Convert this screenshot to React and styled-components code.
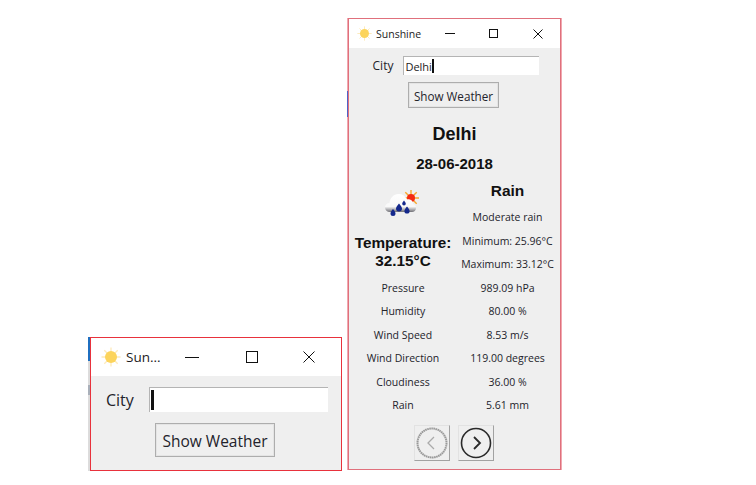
import React from "react";
import styled, { createGlobalStyle } from "styled-components";

const Global = createGlobalStyle`
  html, body {
    margin: 0;
    padding: 0;
    background: #fff;
  }
  body {
    width: 756px;
    height: 485px;
    overflow: hidden;
    position: relative;
    font-family: "Open Sans", "Liberation Sans", sans-serif;
  }
`;

// bits of the desktop that peek out behind the pasted windows
const EdgeStrip = styled.div`
  position: absolute;
  left: ${p => p.$x}px;
  top: ${p => p.$y}px;
  width: ${p => p.$w}px;
  height: ${p => p.$h}px;
  background: ${p => p.$color};
`;

const Window = styled.div`
  position: absolute;
  left: ${p => p.$x}px;
  top: ${p => p.$y}px;
  width: ${p => p.$w}px;
  height: ${p => p.$h}px;
  box-sizing: border-box;
  border: 1px solid ${p => p.$border};
  background: #efefef;
  display: flex;
  flex-direction: column;
`;

const TitleBar = styled.div`
  height: ${p => p.$h}px;
  flex: none;
  background: #fff;
  display: flex;
  align-items: center;
  color: #111;
  font-size: ${p => p.$font}px;
`;

const TitleIcon = styled.span`
  flex: none;
  display: flex;
  margin-left: ${p => p.$left}px;
  margin-right: ${p => p.$right}px;
`;

const TitleText = styled.span`
  flex: none;
  width: ${p => p.$w}px;
  white-space: nowrap;
  color: #1c1c1c;
`;

const WinButton = styled.span`
  flex: none;
  width: ${p => p.$w}px;
  display: flex;
  justify-content: center;
`;

const SmallBody = styled.div`
  flex: 1;
  display: flex;
  flex-direction: column;
  align-items: flex-start;
  padding: 11px 0 0 15px;
`;

const CityRow = styled.div`
  display: flex;
  align-items: center;
  gap: ${p => p.$gap}px;
  margin-left: ${p => p.$left || 0}px;
`;

const CityLabel = styled.span`
  font-size: ${p => p.$font}px;
  color: #23232b;
`;

const CityInput = styled.div`
  box-sizing: border-box;
  width: ${p => p.$w}px;
  height: ${p => p.$h}px;
  background: #fff;
  border-top: 1px solid #b4b4b4;
  border-left: 1px solid #b4b4b4;
  display: flex;
  align-items: center;
  padding-left: 1px;
  font-size: ${p => p.$font}px;
  color: #222;
`;

const Caret = styled.span`
  display: inline-block;
  width: ${p => p.$w}px;
  height: ${p => p.$h}px;
  background: #111;
`;

const PushButton = styled.div`
  box-sizing: border-box;
  width: ${p => p.$w}px;
  height: ${p => p.$h}px;
  margin: ${p => p.$margin};
  padding-top: 1px;
  border: 1px solid #adadad;
  box-shadow: inset 0 0 0 1px #e4e4e4;
  background: #efefef;
  display: flex;
  align-items: center;
  justify-content: center;
  font-size: ${p => p.$font}px;
  color: #23232b;
  white-space: nowrap;
`;

const BigBody = styled.div`
  flex: 1;
  display: flex;
  flex-direction: column;
  align-items: center;
  padding-top: 8px;
`;

const BoldLine = styled.div`
  font-family: "Liberation Sans", Arial, sans-serif;
  font-weight: bold;
  font-size: ${p => p.$font}px;
  line-height: ${p => p.$line}px;
  margin-top: ${p => p.$top || 0}px;
  color: #111;
  text-align: center;
`;

const Columns = styled.div`
  width: 100%;
  margin-top: 5px;
  display: grid;
  grid-template-columns: 108px 101px;
`;

const Cell = styled.div`
  height: ${p => p.$h || 23.5}px;
  display: flex;
  align-items: center;
  justify-content: center;
  font-size: 10.5px;
  color: #23232b;
  white-space: nowrap;
`;

const IconCell = styled.div`
  grid-row: span 2;
  display: flex;
  align-items: flex-start;
  justify-content: center;
  padding: 11px 0 0 0;
`;

const TempCell = styled.div`
  grid-row: span 2;
  display: flex;
  flex-direction: column;
  align-items: center;
  justify-content: center;
  padding-bottom: 2px;
  white-space: nowrap;
`;

const NavRow = styled.div`
  display: flex;
  gap: 8px;
  margin-top: 8px;
  margin-right: 1px;
`;

const NavButton = styled.div`
  box-sizing: border-box;
  width: 36px;
  height: 36px;
  background: #efefef;
  border-top: 1px solid #e2e2e2;
  border-left: 1px solid #e2e2e2;
  border-right: 1px solid #a2a2a2;
  border-bottom: 1px solid #a2a2a2;
  display: flex;
  align-items: center;
  justify-content: center;
`;

const Sun = ({ size }) => (
  <svg width={size} height={size} viewBox="0 0 20 20">
    <g stroke="#fdeabb" strokeWidth="1.3">
      <path d="M10 .5v19M.5 10h19M3.3 3.3l13.400 13.400M16.700 3.300L3.300 16.700" />
    </g>
    <circle cx="10" cy="10" r="6" fill="#fcd45c" />
  </svg>
);

const Minimize = ({ w }) => (
  <svg width={w} height="3" viewBox={`0 0 ${w} 3`}>
    <path d={`M0 1.5H${w}`} stroke="#111" strokeWidth="1" />
  </svg>
);

const Maximize = ({ s }) => (
  <svg width={s} height={s} viewBox={`0 0 ${s} ${s}`}>
    <rect x=".5" y=".5" width={s - 1} height={s - 1} fill="none" stroke="#111" />
  </svg>
);

const Close = ({ s }) => (
  <svg width={s} height={s} viewBox={`0 0 ${s} ${s}`}>
    <path d={`M.5 .5L${s - 0.5} ${s - 0.5}M${s - 0.5} .5L.5 ${s - 0.5}`} stroke="#111" strokeWidth="1" fill="none" />
  </svg>
);

const WeatherIcon = () => (
  <svg width="36" height="30" viewBox="0 0 36 30">
    <defs>
      <linearGradient id="cloud" x1="0" y1="0" x2="0" y2="1">
        <stop offset="0" stopColor="#ffffff" />
        <stop offset="0.7" stopColor="#f8f8f8" />
        <stop offset="1" stopColor="#6f6f75" />
      </linearGradient>
    </defs>
    <g stroke="#f7a72c" strokeWidth="1.4">
      <path d="M26 1v16M18 9h16M20.300 3.300l11.400 11.400M31.700 3.300L20.300 14.700" />
    </g>
    <circle cx="26" cy="9" r="4" fill="#f42a10" />
    <path
      d="M5 23c-3 0-5-2-5-4.500 0-2.500 2-4.500 4.500-4.500.5-5 4-9 9-9 4 0 7 2 8.500 5.500 1-.5 3-.5 4 .5 1.500 1 2 2.500 2 4 2 .5 3 2 3 4 0 2.500-2 4-4 4z"
      fill="url(#cloud)"
    />
    <g fill="#14288c">
      <path d="M8 20c1.500 2 2.500 3 2.500 4.500a2.500 2.500 0 0 1-5 0c0-1.500 1-2.500 2.500-4.500z" />
      <path d="M14 14.500c1.700 2.300 3 3.500 3 5a3 3 0 0 1-6 0c0-1.500 1.300-2.700 3-5z" />
      <path d="M19 11.500c1 1.400 1.800 2.200 1.800 3.200a1.800 1.800 0 0 1-3.600 0c0-1 .8-1.800 1.800-3.200z" />
      <path d="M22 17.500c1.500 2 2.600 3 2.600 4.500a2.600 2.600 0 0 1-5.200 0c0-1.500 1.100-2.500 2.600-4.500z" />
    </g>
  </svg>
);

const NavCircle = ({ direction, disabled }) => {
  const color = disabled ? "#999" : "#2a2a2a";
  const chevron = direction === "left" ? "M18 10l-6 6 6 6" : "M14 10l6 6-6 6";
  return (
    <svg width="32" height="32" viewBox="0 0 32 32">
      <circle
        cx="16"
        cy="16"
        r="14.5"
        fill="none"
        stroke={color}
        strokeWidth={disabled ? 2 : 1.6}
        strokeDasharray={disabled ? "1.6 .5" : undefined}
      />
      <path d={chevron} fill="none" stroke={disabled ? "#aaa" : color} strokeWidth={disabled ? 1.3 : 1.8} />
    </svg>
  );
};

const stats = [
  ["Pressure", "989.09 hPa"],
  ["Humidity", "80.00 %"],
  ["Wind Speed", "8.53 m/s"],
  ["Wind Direction", "119.00 degrees"],
  ["Cloudiness", "36.00 %"],
  ["Rain", "5.61 mm"]
];

const App = () => (
  <>
    <Global />
    <EdgeStrip $x={88} $y={337} $w={2} $h={134} $color="#dcdcdc" />
    <EdgeStrip $x={88} $y={337} $w={2} $h={24} $color="#1f6fc0" />
    <EdgeStrip $x={88} $y={385} $w={2} $h={10} $color="#a9b0ba" />
    <EdgeStrip $x={347} $y={18} $w={1} $h={452} $color="#f0a8b0" />
    <EdgeStrip $x={347} $y={91} $w={1} $h={26} $color="#4f62c8" />
    <EdgeStrip $x={561} $y={18} $w={1} $h={452} $color="#f0a8b0" />

    <Window $x={90} $y={337} $w={252} $h={134} $border="#e8323c">
      <TitleBar $h={38} $font={13.5}>
        <TitleIcon $left={10} $right={5}>
          <Sun size={20} />
        </TitleIcon>
        <TitleText $w={34}>Sun...</TitleText>
        <WinButton $w={64}>
          <Minimize w={14} />
        </WinButton>
        <WinButton $w={55}>
          <Maximize s={12} />
        </WinButton>
        <WinButton $w={60}>
          <Close s={12} />
        </WinButton>
      </TitleBar>
      <SmallBody>
        <CityRow $gap={15}>
          <CityLabel $font={16}>City</CityLabel>
          <CityInput $w={179} $h={25} $font={14}>
            <Caret $w={3} $h={20} />
          </CityInput>
        </CityRow>
        <PushButton $w={120} $h={34} $font={15.5} $margin="11px 0 0 49px">
          Show Weather
        </PushButton>
      </SmallBody>
    </Window>

    <Window $x={348} $y={18} $w={213} $h={452} $border="#e0707c">
      <TitleBar $h={29} $font={10.5}>
        <TitleIcon $left={8} $right={4}>
          <Sun size={15} />
        </TitleIcon>
        <TitleText $w={51}>Sunshine</TitleText>
        <WinButton $w={45}>
          <Minimize w={10} />
        </WinButton>
        <WinButton $w={43}>
          <Maximize s={9} />
        </WinButton>
        <WinButton $w={45}>
          <Close s={10} />
        </WinButton>
      </TitleBar>
      <BigBody>
        <CityRow $gap={10} $left={3}>
          <CityLabel $font={12}>City</CityLabel>
          <CityInput $w={136} $h={19} $font={11}>
            Delhi
            <Caret $w={2} $h={14} />
          </CityInput>
        </CityRow>
        <PushButton $w={91} $h={26} $font={11.7} $margin="7px 2px 0 0">
          Show Weather
        </PushButton>
        <BoldLine $font={18} $line={22} $top={15}>
          Delhi
        </BoldLine>
        <BoldLine $font={15} $line={18} $top={10}>
          28-06-2018
        </BoldLine>
        <Columns>
          <IconCell>
            <WeatherIcon />
          </IconCell>
          <Cell $h={26}>
            <BoldLine $font={15.5} $line={18}>
              Rain
            </BoldLine>
          </Cell>
          <Cell $h={25}>Moderate rain</Cell>
          <TempCell>
            <BoldLine $font={15.3} $line={18}>
              Temperature:
            </BoldLine>
            <BoldLine $font={15.3} $line={18}>
              32.15°C
            </BoldLine>
          </TempCell>
          <Cell>Minimum: 25.96°C</Cell>
          <Cell>Maximum: 33.12°C</Cell>
          {stats.map(([label, value]) => (
            <React.Fragment key={label}>
              <Cell>{label}</Cell>
              <Cell>{value}</Cell>
            </React.Fragment>
          ))}
        </Columns>
        <NavRow>
          <NavButton>
            <NavCircle direction="left" disabled />
          </NavButton>
          <NavButton>
            <NavCircle direction="right" />
          </NavButton>
        </NavRow>
      </BigBody>
    </Window>
  </>
);

export default App;
